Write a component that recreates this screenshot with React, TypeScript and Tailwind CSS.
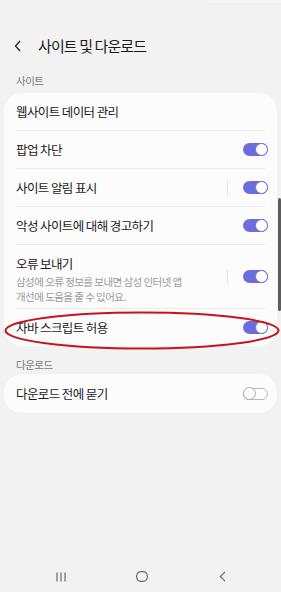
import React from "react";

const font = { fontFamily: '"Noto Sans CJK KR", "Noto Sans", sans-serif' };

function Toggle({ on }: { on: boolean }) {
  if (on) {
    return (
      <div className="flex h-[13px] w-[25px] items-center justify-end rounded-full bg-[#6b6ddb]">
        <div className="h-[13px] w-[13px] rounded-full border-[1.5px] border-[#6b6ddb] bg-white" />
      </div>
    );
  }
  return (
    <div className="flex h-[12px] w-[25px] items-center justify-start rounded-full border border-[#b8b8b8] bg-white">
      <div className="-ml-px h-[13px] w-[13px] rounded-full border border-[#a8a8a8] bg-white" />
    </div>
  );
}

function Divider() {
  return <div className="mx-[12px] h-px bg-[#ebebeb]" />;
}

function Row({
  title,
  sub,
  on,
  vline,
  h = "h-[37px]",
}: {
  title: string;
  sub?: string[];
  on?: boolean;
  vline?: boolean;
  h?: string;
}) {
  return (
    <div className={`flex ${h} items-center pl-[12px] pr-[9px]`}>
      <div className={`flex flex-1 flex-col ${sub ? "self-start pt-[11px]" : ""}`}>
        <div className="text-[12.5px] leading-[16px] tracking-[-0.6px] text-[#1b1b1b]">{title}</div>
        {sub && (
          <div className="mt-[2px] text-[10.5px] leading-[15px] tracking-[-0.55px] text-[#9a9a9a]">
            {sub.map((s) => (
              <div key={s}>{s}</div>
            ))}
          </div>
        )}
      </div>
      {vline && <div className="mr-[15px] h-[16px] w-px bg-[#e4e4e4]" />}
      {on !== undefined && <Toggle on={on} />}
    </div>
  );
}

export default function App() {
  return (
    <div
      className="relative flex h-[592px] w-[281px] flex-col overflow-hidden bg-[#f2f2f2]"
      style={font}
    >
      {/* top faint line */}
      <div className="flex h-[3px] justify-end pt-[1px]">
        <div className="h-[1px] w-[75px] bg-[#fbfbfb]" />
      </div>

      {/* header */}
      <div className="flex h-[85px] flex-col">
        <div className="mt-[33px] flex h-[20px] items-center">
          <svg width="8" height="12" viewBox="0 0 8 12" className="ml-[14px]">
            <path d="M6 1 L1.5 6 L6 11" fill="none" stroke="#222" strokeWidth="1.3" />
          </svg>
          <div className="ml-[16px] text-[15px] tracking-[-0.9px] text-[#1a1a1a]">
            사이트 및 다운로드
          </div>
        </div>
        <div className="ml-[16px] mt-[17px] text-[10.5px] leading-[15px] tracking-[-0.5px] text-[#7a7a7a]">
          사이트
        </div>
      </div>

      {/* card 1 */}
      <div className="mx-[4px] mt-[5px] rounded-[18px] bg-[#fcfcfc]">
        <Row title="웹사이트 데이터 관리" />
        <Divider />
        <Row title="팝업 차단" on />
        <Divider />
        <Row title="사이트 알림 표시" on vline />
        <Divider />
        <Row title="악성 사이트에 대해 경고하기" on />
        <Divider />
        <Row
          title="오류 보내기"
          sub={["삼성에 오류 정보를 보내면 삼성 인터넷 앱", "개선에 도움을 줄 수 있어요."]}
          on
          vline
          h="h-[63px]"
        />
        <Divider />
        <Row title="자바 스크립트 허용" on h="h-[37px]" />
      </div>

      <div className="ml-[16px] mt-[11px] text-[10.5px] leading-[15px] tracking-[-0.5px] text-[#7a7a7a]">
        다운로드
      </div>

      {/* card 2 */}
      <div className="mx-[4px] mt-[2px] rounded-[18px] bg-[#fcfcfc]">
        <Row title="다운로드 전에 묻기" on={false} h="h-[39px]" />
      </div>

      <div className="flex-1" />

      {/* nav bar */}
      <div className="flex justify-center pb-[10px]">
        <div className="flex w-[170px] items-center justify-between">
          <svg width="10" height="10" viewBox="0 0 10 10">
            <path d="M1 0.5 V9.5 M5 0.5 V9.5 M9 0.5 V9.5" stroke="#6a6a6a" strokeWidth="1.2" />
          </svg>
          <svg width="12" height="11" viewBox="0 0 12 11">
            <rect x="0.7" y="0.7" width="10.6" height="9.6" rx="4" fill="none" stroke="#6a6a6a" strokeWidth="1.2" />
          </svg>
          <svg width="7" height="11" viewBox="0 0 7 11">
            <path d="M6 0.8 L1.3 5.5 L6 10.2" fill="none" stroke="#6a6a6a" strokeWidth="1.2" />
          </svg>
        </div>
      </div>

      {/* scrollbar */}
      <div className="absolute left-[278px] top-[198px] h-[113px] w-[2.5px] rounded-full bg-[#5c5c5c]" />

      {/* red annotation ellipse */}
      <svg className="absolute left-0 top-0" width="281" height="592" viewBox="0 0 281 592">
        <ellipse cx="142" cy="330.5" rx="136.5" ry="18" fill="none" stroke="#c4141c" strokeWidth="2" />
      </svg>
    </div>
  );
}
